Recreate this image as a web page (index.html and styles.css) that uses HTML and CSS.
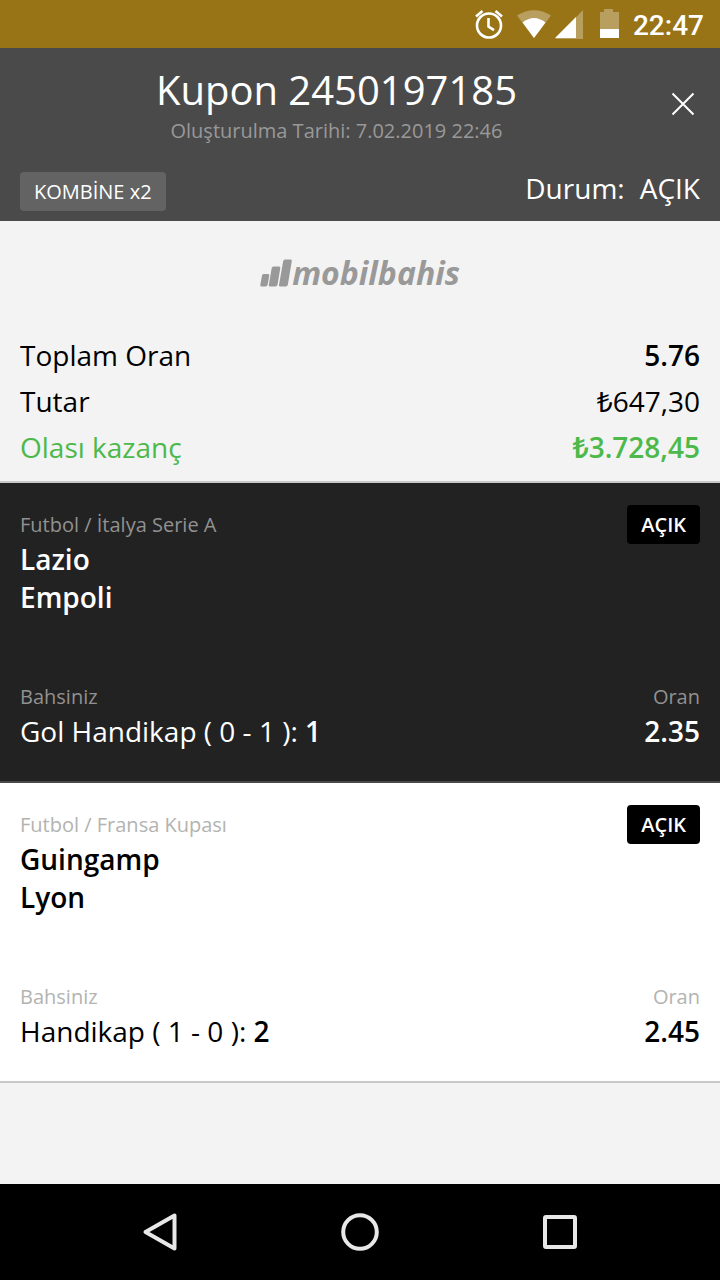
FILE: index.html
```html
<!DOCTYPE html>
<html lang="tr">
<head>
<meta charset="utf-8">
<meta name="viewport" content="width=device-width, initial-scale=1">
<title>Kupon 2450197185</title>
<link rel="stylesheet" href="styles.css">
</head>
<body>
<div class="status-bar">
  <svg class="status-icons" width="148" height="32" viewBox="0 0 148 32" aria-hidden="true">
    <g fill="none" stroke="#fff" stroke-width="2.6">
      <circle cx="15" cy="17.500" r="12"/>
      <path d="M14.500 10v8.500l5.500 3.600"/>
      <path d="M2 8.500 8.500 3M21.500 3 28 8.500"/>
    </g>
    <path d="M43 7.500Q60-3 77 7.500L60 30Z" fill="#b89f5f"/>
    <path d="M48.500 14.500Q60 5.500 71.500 14.500L60 30Z" fill="#fff"/>
    <path d="M81 31 109 2v29Z" fill="#b89f5f"/>
    <path d="M81 30 102 9v21Z" fill="#fff"/>
    <path d="M126 4h4V1h9v3h6v17h-19Z" fill="#b89f5f"/>
    <path d="M126 21h19v9h-19Z" fill="#fff"/>
  </svg>
  <time class="clock">22:47</time>
</div>

<header class="header">
  <div class="header-top">
    <div class="heading">
      <h1 class="title">Kupon 2450197185</h1>
      <p class="created">Oluşturulma Tarihi: 7.02.2019 22:46</p>
    </div>
    <button class="close" type="button" aria-label="Kapat">
      <svg width="24" height="24" viewBox="0 0 24 24"><path d="M1.500 1.500l21 21M22.500 1.500l-21 21" fill="none" stroke="#fff" stroke-width="2"/></svg>
    </button>
  </div>
  <div class="header-bottom">
    <span class="tag tag-type">KOMBİNE x2</span>
    <p class="state"><span>Durum:</span><span>AÇIK</span></p>
  </div>
</header>

<main class="content">
  <section class="summary">
    <div class="logo">
      <svg width="32" height="28" viewBox="0 0 32 28" fill="#999" aria-hidden="true">
        <path d="M3.500 15h4.500q1.600 0 1.300 1.600L7.700 25.500q-.4 2-2.200 2H1.500Q0 27.500.3 26L2 16.500Q2.200 15 3.500 15Z"/>
        <path d="M13.500 7.500h5.500q1.600 0 1.300 1.600L17.600 25.500q-.4 2-2.200 2H10q-1.500 0-1.200-1.600L11.700 9.100Q12 7.500 13.500 7.500Z"/>
        <path d="M25 .5h5.500q1.600 0 1.300 1.600L27.900 25.500q-.4 2-2.200 2H20.200q-1.500 0-1.200-1.600L23.200 2.100Q23.500.5 25 .5Z"/>
      </svg>
      <span class="logo-text">mobilbahis</span>
    </div>
    <dl class="totals">
      <div class="total"><dt>Toplam Oran</dt><dd class="strong">5.76</dd></div>
      <div class="total"><dt>Tutar</dt><dd>₺647,30</dd></div>
      <div class="total total-win"><dt>Olası kazanç</dt><dd class="strong">₺3.728,45</dd></div>
    </dl>
  </section>

  <article class="bet bet-dark">
    <div class="bet-row">
      <div class="match">
        <p class="label">Futbol / İtalya Serie A</p>
        <h2 class="team">Lazio</h2>
        <h2 class="team">Empoli</h2>
      </div>
      <span class="tag tag-open">AÇIK</span>
    </div>
    <div class="bet-row">
      <div>
        <p class="label">Bahsiniz</p>
        <p>Gol Handikap ( 0 - 1 ): <b class="strong">1</b></p>
      </div>
      <div class="odds">
        <p class="label">Oran</p>
        <p class="strong">2.35</p>
      </div>
    </div>
  </article>

  <article class="bet">
    <div class="bet-row">
      <div class="match">
        <p class="label">Futbol / Fransa Kupası</p>
        <h2 class="team">Guingamp</h2>
        <h2 class="team">Lyon</h2>
      </div>
      <span class="tag tag-open">AÇIK</span>
    </div>
    <div class="bet-row">
      <div>
        <p class="label">Bahsiniz</p>
        <p>Handikap ( 1 - 0 ): <b class="strong">2</b></p>
      </div>
      <div class="odds">
        <p class="label">Oran</p>
        <p class="strong">2.45</p>
      </div>
    </div>
  </article>
</main>

<nav class="nav">
  <button class="nav-button" type="button" aria-label="Geri">
    <svg width="40" height="40" viewBox="0 0 40 40"><path d="M34.500 3.500v33L5.500 20Z"/></svg>
  </button>
  <button class="nav-button" type="button" aria-label="Ana ekran">
    <svg width="40" height="40" viewBox="0 0 40 40"><circle cx="20" cy="20" r="16.800"/></svg>
  </button>
  <button class="nav-button" type="button" aria-label="Son uygulamalar">
    <svg width="40" height="40" viewBox="0 0 40 40"><rect x="5" y="5" width="30" height="30" rx="1"/></svg>
  </button>
</nav>
</body>
</html>
```
FILE: styles.css
```css
* {
  box-sizing: border-box;
}

body,
h1,
h2,
p,
dl,
dd {
  margin: 0;
}

body {
  display: flex;
  flex-direction: column;
  min-height: 100vh;
  background: #f3f3f3;
  color: #000;
  font-family: "Open Sans", "Noto Sans", sans-serif;
  font-size: 28px;
  line-height: 38px;
}

button {
  display: flex;
  align-items: center;
  justify-content: center;
  padding: 0;
  border: 0;
  background: none;
}

.status-bar {
  display: flex;
  align-items: center;
  justify-content: flex-end;
  gap: 11px;
  height: 48px;
  padding: 0 16px;
  background: #987417;
}

.clock {
  padding-top: 4px;
  color: #fff;
  font-family: Roboto, sans-serif;
  font-size: 28px;
  font-weight: 500;
}

.header {
  padding: 15px 20px 10px;
  background: #4a4a4a;
  color: #fff;
}

.header-top {
  display: flex;
  align-items: center;
  gap: 13px;
}

.heading {
  flex: 1;
  text-align: center;
}

.title {
  font-size: 40px;
  font-weight: 400;
  line-height: 54px;
}

.created {
  color: #999;
  font-size: 20px;
  line-height: 28px;
}

.close {
  width: 34px;
  height: 48px;
}

.header-bottom {
  display: flex;
  align-items: flex-end;
  justify-content: space-between;
  padding-top: 24px;
}

.state {
  display: flex;
  gap: 15px;
  padding-bottom: 4px;
}

.tag {
  padding: 5px 14px;
  border-radius: 4px;
  color: #fff;
  font-size: 20px;
  line-height: 29px;
}

.tag-type {
  background: #636363;
}

.tag-open {
  background: #000;
  font-weight: 600;
}

.content {
  flex: 1;
}

.summary {
  padding: 34px 20px 15px;
  border-bottom: 2px solid #c8c8c8;
}

.logo {
  display: flex;
  align-items: center;
  justify-content: center;
  height: 36px;
  color: #999;
}

.logo-text {
  font-size: 32px;
  font-style: italic;
  font-weight: 700;
}

.totals {
  display: flex;
  flex-direction: column;
  gap: 8px;
  padding-top: 45px;
}

.total,
.bet-row {
  display: flex;
  align-items: flex-start;
  justify-content: space-between;
}

.total-win {
  color: #4cb94a;
}

.strong,
.team {
  font-weight: 600;
}

.bet {
  display: flex;
  flex-direction: column;
  gap: 66px;
  padding: 22px 20px 31px;
  border-bottom: 2px solid #c8c8c8;
  background: #fff;
}

.bet-dark {
  border-color: #4a4a4a;
  background: #222;
  color: #fff;
}

.match {
  padding-top: 5px;
}

.label {
  color: #b3b3b0;
  font-size: 20px;
  line-height: 30px;
}

.bet-dark .label {
  color: #919191;
}

.team {
  font-size: 28px;
}

.odds {
  text-align: right;
}

.nav {
  display: flex;
  justify-content: center;
  height: 96px;
  background: #000;
}

.nav-button {
  width: 200px;
}

.nav-button svg {
  fill: none;
  stroke: #e8e8e8;
  stroke-linejoin: round;
  stroke-width: 4;
}
```
